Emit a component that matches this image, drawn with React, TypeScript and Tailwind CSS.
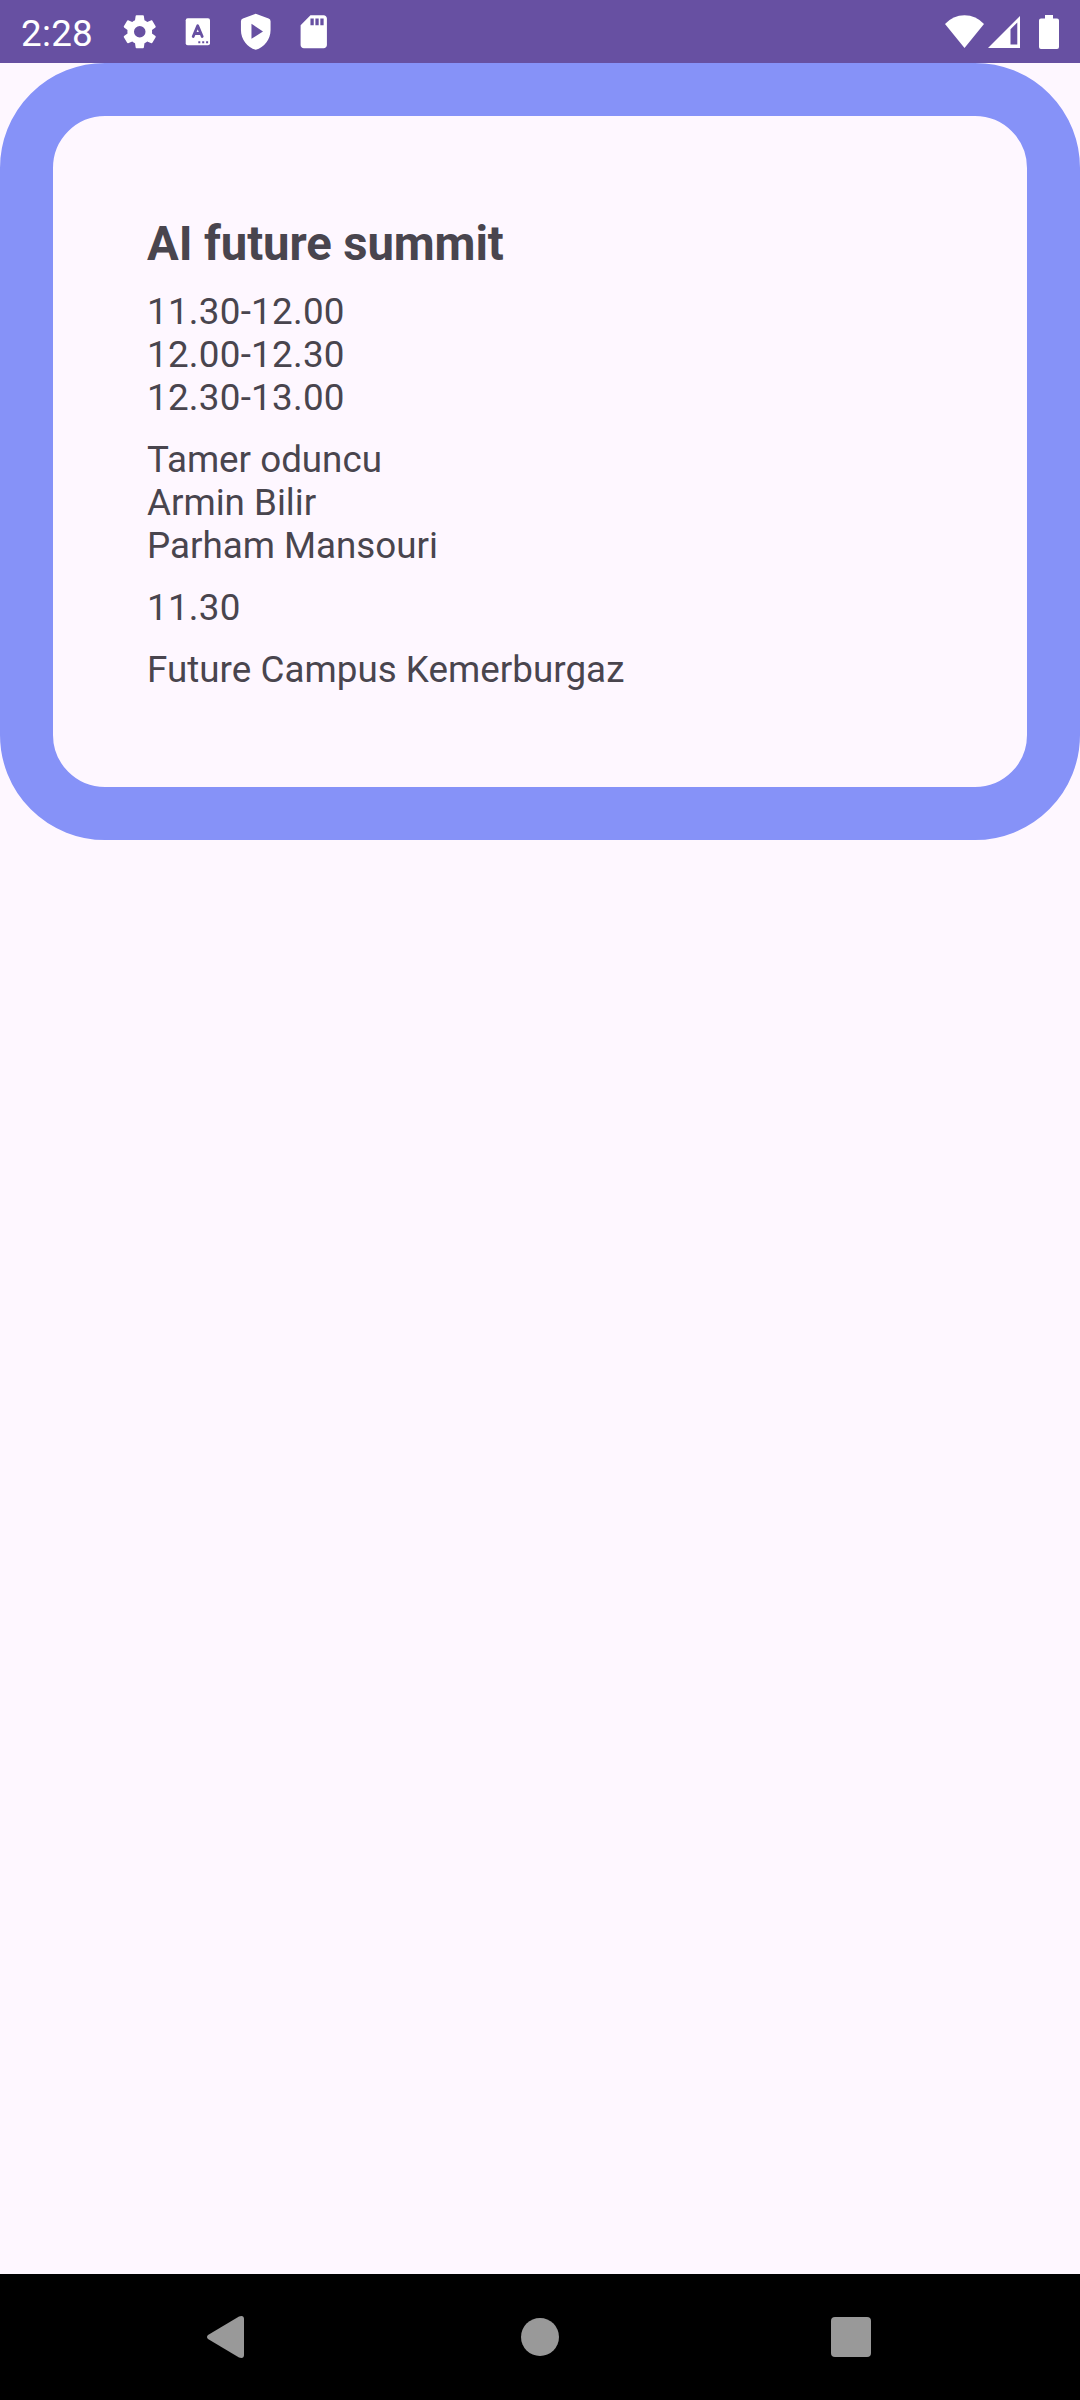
const sessions = ['11.30-12.00', '12.00-12.30', '12.30-13.00'];
const speakers = ['Tamer oduncu', 'Armin Bilir', 'Parham Mansouri'];

function StatusBar() {
  return (
    <header className="flex h-[63px] shrink-0 items-center justify-between bg-[#6750a2] text-white">
      <div className="flex items-center">
        <span className="ml-[21px] w-[99px] pt-[4px] text-[36.75px] leading-[43px] tracking-[0.3px]">2:28</span>
        <div className="flex items-center gap-[18.5px]">
          <svg className="size-[39.5px]" viewBox="0 0 24 24" fill="currentColor">
            <path d="M19.5 12c0-.34-.03-.66-.07-1l2.1-1.64c.19-.15.24-.42.12-.64l-2-3.46c-.12-.22-.39-.31-.61-.22l-2.48 1a7.3 7.3 0 0 0-1.7-.98l-.37-2.64A.5.5 0 0 0 14 2h-4a.5.5 0 0 0-.5.42L9.12 5.06c-.61.25-1.17.59-1.69.98l-2.49-1a.5.5 0 0 0-.61.22l-2 3.46c-.13.22-.07.49.12.64L4.56 11c-.04.33-.06.66-.06 1s.03.67.07 1l-2.11 1.65c-.19.15-.24.42-.12.64l2 3.46c.12.22.39.3.61.22l2.49-1c.52.4 1.08.73 1.69.98l.38 2.65c.03.24.24.42.49.42h4c.25 0 .46-.18.49-.42l.38-2.65c.61-.25 1.17-.59 1.69-.98l2.49 1c.23.09.49 0 .61-.22l2-3.46c.12-.22.07-.49-.12-.64L19.43 13c.04-.33.07-.66.07-1zM12 15.5a3.5 3.5 0 1 1 0-7 3.5 3.5 0 0 1 0 7z" fillRule="evenodd" />
          </svg>
          <svg className="size-[39.5px]" viewBox="0 0 39.5 39.5" fill="currentColor">
            <rect x="7.7" y="6.2" width="24.3" height="27" rx="2" />
            <path d="M15.2 24.5 19.7 13.7 24.2 24.5M17 21.5h5.4" fill="none" stroke="#6750a2" strokeWidth="2.8" strokeLinecap="round" strokeLinejoin="round" />
            <path d="M20.3 29.2h2v2h-2zM24.2 29.2h2v2h-2zM28.1 29.2h2v2h-2z" fill="#6750a2" />
          </svg>
          <svg className="size-[39.5px]" viewBox="0 0 24 24" fill="currentColor">
            <path fillRule="evenodd" d="M12 1 4.2 3.9Q3 4.4 3 5.6V11c0 5.55 3.84 10.74 9 12 5.16-1.26 9-6.45 9-12V5.6q0-1.2-1.2-1.7zM9.4 7.2 16.4 11.8 9.4 16.3z" />
          </svg>
          <svg className="size-[39.5px]" viewBox="0 0 24 24" fill="currentColor">
            <path fillRule="evenodd" d="M18 2h-8L4.02 8 4 20c0 1.1.9 2 2 2h12c1.1 0 2-.9 2-2V4c0-1.1-.9-2-2-2zM12 8h-2V4h2zM15 8h-2V4h2zM18 8h-2V4h2z" />
          </svg>
        </div>
      </div>
      <div className="mr-[21px] flex items-center">
        <svg className="h-[34px] w-[39px]" viewBox="0 0 39 34" fill="currentColor">
          <path d="M0 9Q8 .2 19.5.2T39 9L19.500 33z" />
        </svg>
        <svg className="ml-[3.5px] h-[34px] w-[32.5px]" viewBox="0 0 32.5 34" fill="currentColor">
          <path fillRule="evenodd" d="M0 33 32.5.5V33zM22.5 14.2V29.5H29.3V7.500z" />
        </svg>
        <svg className="ml-[19px] h-[34px] w-[20px]" viewBox="0 0 20 34" fill="currentColor">
          <path d="M6 0h8v3.500h4q2 0 2 2V32q0 2-2 2H2q-2 0-2-2V5.500q0-2 2-2h4z" />
        </svg>
      </div>
    </header>
  );
}

function EventCard() {
  return (
    <article className="h-[777px] rounded-[105px] border-[53px] border-[#8692f8] pt-[101px] pl-[94px] text-[36.75px] leading-[43px] text-[#49454e]">
      <h1 className="text-[47.25px] leading-[55px] font-bold tracking-[-0.1px]">AI future summit</h1>
      <div className="mt-[18px] flex flex-col gap-[19px]">
        <div className="tracking-[0.27px]">
          {sessions.map((s) => (
            <p key={s}>{s}</p>
          ))}
        </div>
        <div>
          {speakers.map((s) => (
            <p key={s}>{s}</p>
          ))}
        </div>
        <p className="tracking-[0.27px]">11.30</p>
        <p className="tracking-[0.04px]">Future Campus Kemerburgaz</p>
      </div>
    </article>
  );
}

function NavigationBar() {
  return (
    <nav className="flex h-[126px] shrink-0 items-center justify-between bg-black pr-[209px] pl-[206px] text-[#999999]">
      <svg className="h-[44px] w-[39px]" viewBox="0 0 39 44" fill="currentColor">
        <path d="M2 20 33 1.500Q38 0 38 4V40Q38 44 33 42.500L2 24Q0 22 2 20z" />
      </svg>
      <div className="ml-[4px] size-[38.5px] rounded-full bg-[#999999]" />
      <div className="size-[40px] rounded-[4px] bg-[#999999]" />
    </nav>
  );
}

export default function App() {
  return (
    <div className="flex h-[2400px] w-[1080px] flex-col overflow-hidden bg-[#fef7ff] font-['Roboto',sans-serif]">
      <StatusBar />
      <main className="flex-1">
        <EventCard />
      </main>
      <NavigationBar />
    </div>
  );
}
